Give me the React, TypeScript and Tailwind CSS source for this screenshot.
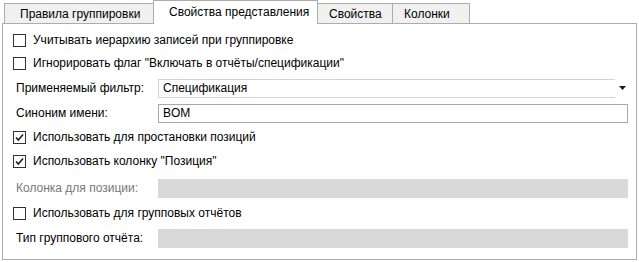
import React from 'react';

const font = { fontFamily: '"Liberation Sans", Arial, sans-serif' };

const CheckBox: React.FC<{ checked?: boolean }> = ({ checked }) => (
  <span className="w-[13px] h-[13px] border border-[#333333] bg-white flex items-center justify-center shrink-0">
    {checked && (
      <svg width="11" height="11" viewBox="0 0 11 11">
        <path d="M2 5.5 L4.3 8 L9 2.5" fill="none" stroke="#1f1f1f" strokeWidth="1.6" />
      </svg>
    )}
  </span>
);

const CheckRow: React.FC<{ h: string; checked?: boolean; label: string }> = ({ h, checked, label }) => (
  <div className={`flex items-center pl-[10px] gap-[7px] ${h}`}>
    <CheckBox checked={checked} />
    <span>{label}</span>
  </div>
);

export default function App() {
  return (
    <div className="w-[639px] h-[262px] bg-white text-[12px] text-black overflow-hidden" style={font}>
      {/* tabs */}
      <div className="flex items-end h-[23px] pl-[4px]">
        <div className="h-[20px] w-[149px] bg-[#f0f0f0] border-l border-t border-[#acacac] flex items-center pl-[15px]">
          Правила группировки
        </div>
        <div className="relative z-10 h-[24px] -mb-px w-[165px] bg-white border-x border-t border-[#acacac] flex items-center pl-[15px] pb-[2px]">
          Свойства представления
        </div>
        <div className="h-[20px] w-[75px] bg-[#f0f0f0] border-r border-t border-[#acacac] flex items-center pl-[11px]">
          Свойства
        </div>
        <div className="h-[20px] w-[77px] bg-[#f0f0f0] border-r border-t border-[#acacac] flex items-center pl-[11px]">
          Колонки
        </div>
      </div>

      {/* panel */}
      <div className="ml-[2px] w-[635px] h-[237px] border border-[#acacac] bg-white pt-[4px] flex flex-col">
        <CheckRow h="h-[24px]" label="Учитывать иерархию записей при группировке" />
        <CheckRow h="h-[22px]" label={'Игнорировать флаг "Включать в отчёты/спецификации"'} />

        <div className="flex items-center h-[28px] pl-[13px]">
          <span className="w-[142px]">Применяемый фильтр:</span>
          <div className="flex items-center">
            <div className="w-[457px] h-[19px] border-y border-l border-[#d2d2d2] flex items-center pl-[4px]">
              Спецификация
            </div>
            <svg width="7" height="4" viewBox="0 0 7 4" className="ml-[4px]">
              <path d="M0 0 H7 L3.5 4 Z" fill="#1a1a1a" />
            </svg>
          </div>
        </div>

        <div className="flex items-center h-[22px] pl-[13px]">
          <span className="w-[142px]">Синоним имени:</span>
          <div className="w-[470px] h-[19px] border border-[#a9a9a9] flex items-center pl-[4px]">BOM</div>
        </div>

        <CheckRow h="h-[26px]" checked label="Использовать для простановки позиций" />
        <CheckRow h="h-[22px]" checked label={'Использовать колонку "Позиция"'} />

        <div className="flex items-center h-[32px] pl-[13px]">
          <span className="w-[142px] text-[#777777]">Колонка для позиции:</span>
          <div className="w-[470px] h-[19px] bg-[#d9d9d9]" />
        </div>

        <CheckRow h="h-[18px]" label="Использовать для групповых отчётов" />

        <div className="flex items-center h-[32px] pl-[13px]">
          <span className="w-[142px]">Тип группового отчёта:</span>
          <div className="w-[470px] h-[19px] bg-[#d9d9d9]" />
        </div>
      </div>
    </div>
  );
}
